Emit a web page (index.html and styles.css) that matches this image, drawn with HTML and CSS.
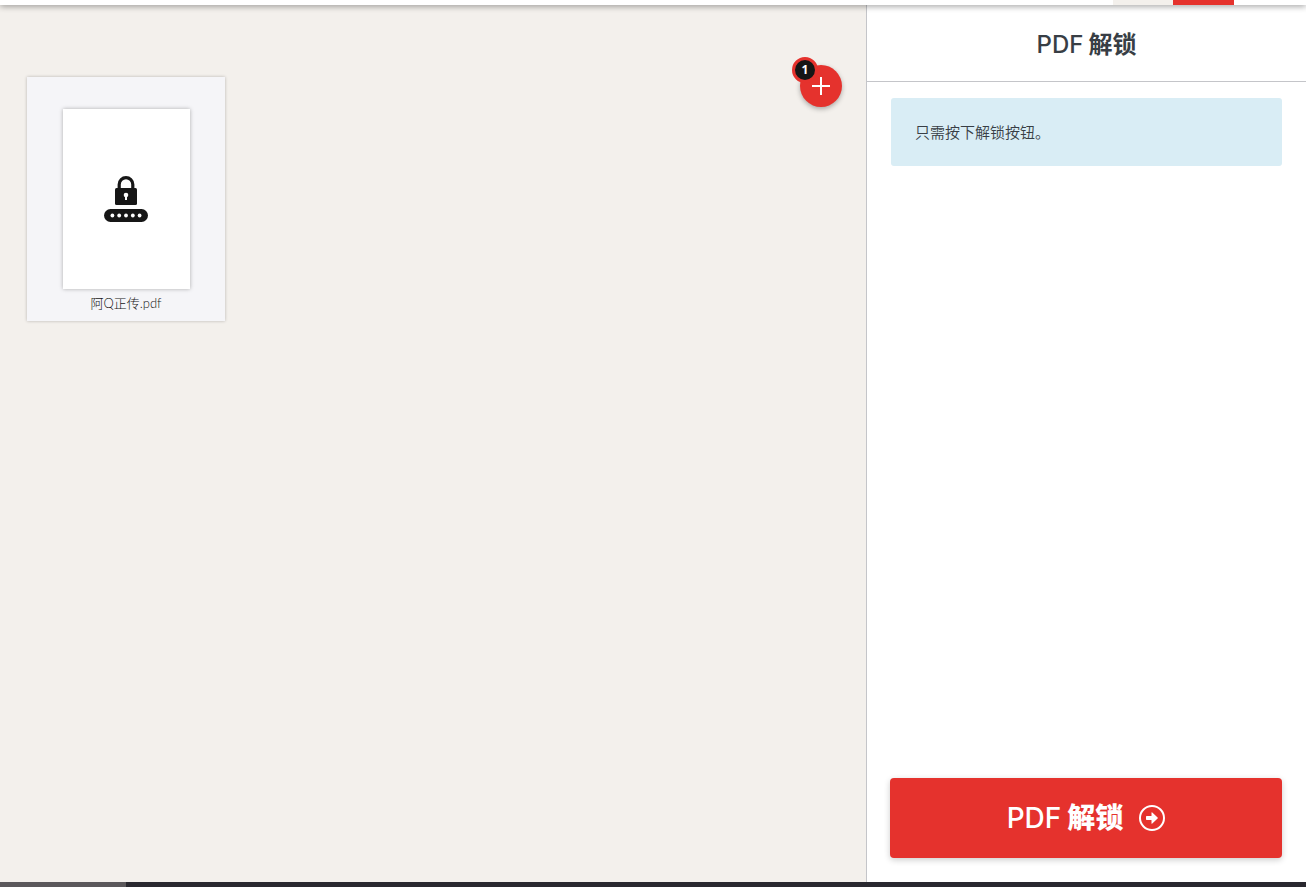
FILE: index.html
```html
<!DOCTYPE html>
<html lang="zh-CN">
<head>
<meta charset="utf-8">
<meta name="viewport" content="width=device-width, initial-scale=1">
<title>PDF 解锁</title>
<link rel="stylesheet" href="styles.css">
</head>
<body>
<div class="app">
  <header class="topbar">
    <span class="topbar-light"></span>
    <span class="topbar-red"></span>
  </header>
  <div class="tool">
    <main class="workarea">
      <figure class="file">
        <div class="file-page">
          <svg class="file-lock" viewBox="0 0 44 46" aria-hidden="true">
            <path d="M15.200 13V8.500a6.800 6.800 0 0 1 13.600 0V13" fill="none" stroke="#161616" stroke-width="3.200"/>
            <path d="M12.500 12h19a1.500 1.500 0 0 1 1.500 1.500v14a1.500 1.500 0 0 1-1.500 1.500h-19a1.500 1.500 0 0 1-1.500-1.500v-14a1.500 1.500 0 0 1 1.500-1.500z" fill="#161616"/>
            <circle cx="22" cy="19" r="2.300" fill="#fff"/>
            <path d="M21 19h2v5h-2z" fill="#fff"/>
            <rect y="33" width="44" height="13" rx="6.500" fill="#161616"/>
            <g fill="#fff"><circle cx="8.400" cy="39.500" r="1.900"/><circle cx="15.200" cy="39.500" r="1.900"/><circle cx="22" cy="39.500" r="1.900"/><circle cx="28.800" cy="39.500" r="1.900"/><circle cx="35.600" cy="39.500" r="1.900"/></g>
          </svg>
        </div>
        <figcaption class="file-name">阿Q正传.pdf</figcaption>
      </figure>
      <button class="add" type="button" aria-label="添加文件">
        <svg class="add-icon" viewBox="0 0 18 18" aria-hidden="true"><path d="M9 0v18M0 9h18" stroke="#fff" stroke-width="2"/></svg>
        <span class="add-count">1</span>
      </button>
    </main>
    <aside class="sidebar">
      <h1 class="sidebar-title"><span>PDF</span> <span class="strong">解锁</span></h1>
      <p class="info">只需按下解锁按钮。</p>
      <button class="process" type="button">
        <span class="process-label"><span>PDF</span> <span class="strong">解锁</span></span>
        <svg class="process-icon" viewBox="0 0 26 26" aria-hidden="true">
          <circle cx="13" cy="13" r="12" fill="none" stroke="#fff" stroke-width="2"/>
          <path d="M7.700 11h4.800V7.800q0-1 .8-.3l5.300 4.900q.6.600 0 1.200l-5.300 4.900q-.8.700-.8-.3V15H7.700q-.7 0-.7-.7v-2.600q0-.7.7-.7z" fill="#fff"/>
        </svg>
      </button>
    </aside>
  </div>
  <footer class="bottombar"></footer>
</div>
</body>
</html>
```
FILE: styles.css
```css
* {
  box-sizing: border-box;
}

body {
  margin: 0;
  color: #383e45;
  font-family: Inter, "Noto Sans CJK SC", sans-serif;
}

button {
  border: 0;
  padding: 0;
  font: inherit;
  color: #fff;
  background: #e5322d;
  cursor: pointer;
}

.app {
  display: flex;
  flex-direction: column;
  min-height: 100vh;
}

.topbar {
  position: relative;
  z-index: 1;
  display: flex;
  justify-content: flex-end;
  height: 5px;
  padding-right: 72px;
  background: #fff;
  box-shadow: 0 1px 6px rgba(0, 0, 0, 0.45);
}

.topbar-light {
  width: 60px;
  background: #f3f0ec;
}

.topbar-red {
  width: 61px;
  background: #e5322d;
}

.tool {
  flex: 1;
  display: flex;
}

.workarea {
  flex: 1;
  display: flex;
  justify-content: space-between;
  align-items: flex-start;
  padding: 60px 24px 24px 27px;
  background: #f3f0ec;
}

.file {
  display: flex;
  flex-direction: column;
  align-items: center;
  width: 198px;
  margin: 12px 0 0;
  padding: 32px 0 8px;
  background: #f5f5f8;
  box-shadow: 0 0 3px rgba(0, 0, 0, 0.25);
}

.file-page {
  display: flex;
  align-items: center;
  justify-content: center;
  width: 127px;
  height: 180px;
  background: #fff;
  box-shadow: 0 0 4px rgba(0, 0, 0, 0.3);
}

.file-lock {
  width: 44px;
  height: 46px;
}

.file-name {
  margin-top: 4px;
  color: #161616;
  font-family: Lato, "Noto Sans CJK SC", sans-serif;
  font-size: 13px;
  font-weight: 300;
  line-height: 20px;
}

.add {
  position: relative;
  display: flex;
  align-items: center;
  justify-content: center;
  width: 42px;
  height: 42px;
  border-radius: 50%;
  box-shadow: 0 2px 5px rgba(0, 0, 0, 0.3);
}

.add-icon {
  width: 18px;
  height: 18px;
}

.add-count {
  position: absolute;
  top: -8px;
  left: -8px;
  width: 26px;
  height: 26px;
  border: 3px solid #e5322d;
  border-radius: 50%;
  background: #161616;
  font-family: "Open Sans", sans-serif;
  font-size: 12px;
  font-weight: 700;
  line-height: 20px;
  text-align: center;
}

.sidebar {
  display: flex;
  flex-direction: column;
  width: 440px;
  border-left: 1px solid #c4c5c9;
  background: #fff;
}

.sidebar-title {
  display: flex;
  align-items: baseline;
  justify-content: center;
  gap: 5px;
  margin: 0;
  padding: 22px 24px 18px;
  border-bottom: 1px solid #c4c5c9;
  font-size: 24px;
  font-weight: 500;
  line-height: 36px;
}

.strong {
  font-weight: 700;
}

.info {
  margin: 16px 24px;
  padding: 25px 24px 23px;
  border-radius: 3px;
  background: #d9edf5;
  font-size: 15px;
  font-weight: 350;
  line-height: 20px;
}

.process {
  display: flex;
  align-items: center;
  justify-content: center;
  gap: 16px;
  height: 80px;
  margin: auto 24px 24px 23px;
  border-radius: 4px;
  font-size: 28px;
  font-weight: 500;
  line-height: 40px;
  box-shadow: 0 2px 6px rgba(0, 0, 0, 0.2);
}

.process-label {
  display: flex;
  align-items: baseline;
  gap: 6px;
}

.process .strong {
  font-weight: 900;
}

.process-icon {
  width: 26px;
  height: 26px;
}

.bottombar {
  height: 5px;
  background: linear-gradient(90deg, #5b585b 126px, #29282f 126px);
}
```
